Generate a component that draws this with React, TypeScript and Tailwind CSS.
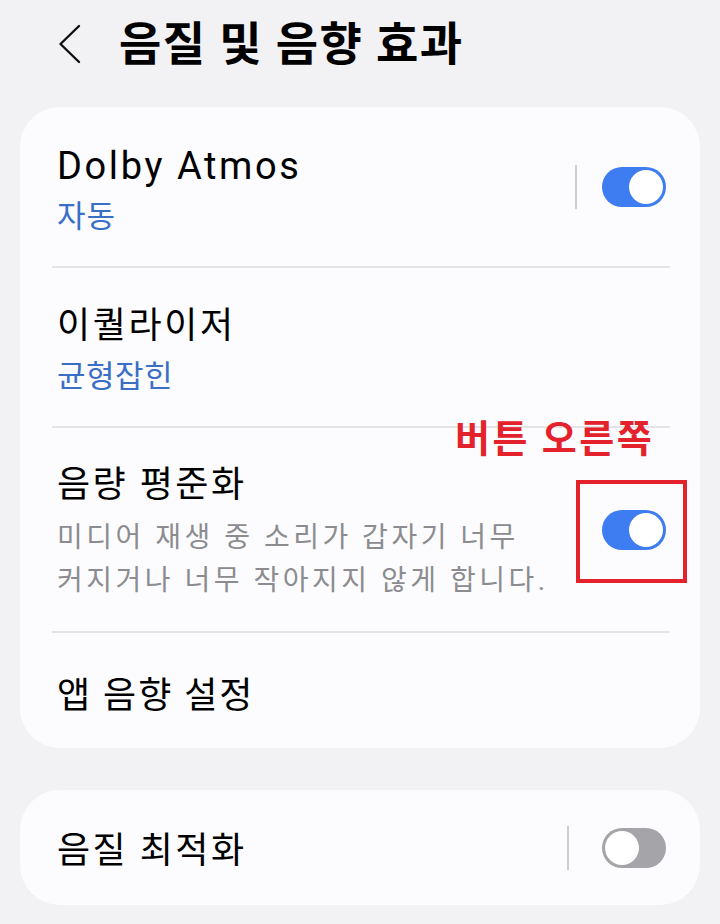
import type { ReactNode } from 'react';

interface ToggleProps {
  on: boolean;
}

function Toggle({ on }: ToggleProps) {
  return (
    <div
      className={`flex h-[40px] w-[64px] shrink-0 items-center rounded-full ${
        on ? 'bg-[#3d7cf1]' : 'bg-[#a4a4a9]'
      }`}
    >
      <div
        className={`h-[34px] w-[34px] rounded-full bg-white ${on ? 'ml-auto mr-[3px]' : 'ml-[3px]'}`}
      />
    </div>
  );
}

function Divider() {
  return <div className="ml-[32px] mr-[30px] h-[2px] bg-[#e4e4e6]" />;
}

interface RowProps {
  className: string;
  textClassName?: string;
  children: ReactNode;
  right?: ReactNode;
}

function Row({ className, textClassName = '', children, right }: RowProps) {
  return (
    <div className={`flex items-center pl-[37px] pr-[34px] ${className}`}>
      <div className={`flex min-w-0 flex-1 flex-col ${textClassName}`}>{children}</div>
      {right}
    </div>
  );
}

export default function App() {
  return (
    <div className="relative min-h-screen bg-[#f2f2f4] pb-10 font-['Roboto','Noto_Sans_CJK_KR',sans-serif] text-black">
      <header className="flex h-[88px] items-center pl-[58px]">
        <svg width="24" height="40" viewBox="0 0 24 40" fill="none" aria-label="뒤로">
          <path
            d="M21 2 L2.5 20 L21 38"
            stroke="#111"
            strokeWidth="2.4"
            strokeLinecap="round"
            strokeLinejoin="round"
          />
        </svg>
        <h1 className="ml-[37px] text-[46px] leading-none font-bold tracking-[1.4px]">
          음질 및 음향 효과
        </h1>
      </header>

      <div className="px-[20px]">
        <section className="mt-[19px] rounded-[40px] bg-[#fcfcfe]">
          <Row
            className="h-[159px]"
            textClassName="pt-[7px]"
            right={
              <div className="flex items-center">
                <div className="h-[44px] w-[2px] bg-[#cdcdd0]" />
                <div className="ml-[25px]">
                  <Toggle on />
                </div>
              </div>
            }
          >
            <span className="text-[38px] leading-[44px] tracking-[2.6px]">Dolby Atmos</span>
            <span className="mt-[9px] text-[31px] leading-[40px] tracking-[1px] text-[#3a6fc6]">
              자동
            </span>
          </Row>
          <Divider />
          <Row className="h-[158px]" textClassName="pt-[7px]">
            <span className="text-[36px] leading-[44px] tracking-[2.6px]">이퀄라이저</span>
            <span className="mt-[9px] text-[31px] leading-[40px] tracking-[0.5px] text-[#3a6fc6]">
              균형잡힌
            </span>
          </Row>
          <Divider />
          <Row className="h-[203px]" textClassName="pt-[5px]" right={<Toggle on />}>
            <span className="text-[36px] leading-[44px] tracking-[2.5px]">음량 평준화</span>
            <span className="mt-[9px] text-[28px] leading-[43px] tracking-[3.5px] text-[#8c8c90]">
              미디어 재생 중 소리가 갑자기 너무
              <br />
              커지거나 너무 작아지지 않게 합니다.
            </span>
          </Row>
          <Divider />
          <Row className="h-[115px]" textClassName="pt-[10px]">
            <span className="text-[36px] leading-[44px] tracking-[2px]">앱 음향 설정</span>
          </Row>
        </section>

        <section className="mt-[42px] rounded-[40px] bg-[#fcfcfe]">
          <Row
            className="h-[115px]"
            textClassName="pt-[6px]"
            right={
              <div className="flex items-center">
                <div className="h-[44px] w-[2px] bg-[#cdcdd0]" />
                <div className="ml-[33px]">
                  <Toggle on={false} />
                </div>
              </div>
            }
          >
            <span className="text-[36px] leading-[44px] tracking-[2.5px]">음질 최적화</span>
          </Row>
        </section>
      </div>

      <div className="absolute left-[455px] top-[412px] text-[38px] leading-[54px] font-bold tracking-[2.5px] text-[#e3222b]">
        버튼 오른쪽
      </div>
      <div className="absolute left-[576px] top-[480px] h-[103px] w-[111px] border-[4px] border-[#e3222b]" />
    </div>
  );
}
